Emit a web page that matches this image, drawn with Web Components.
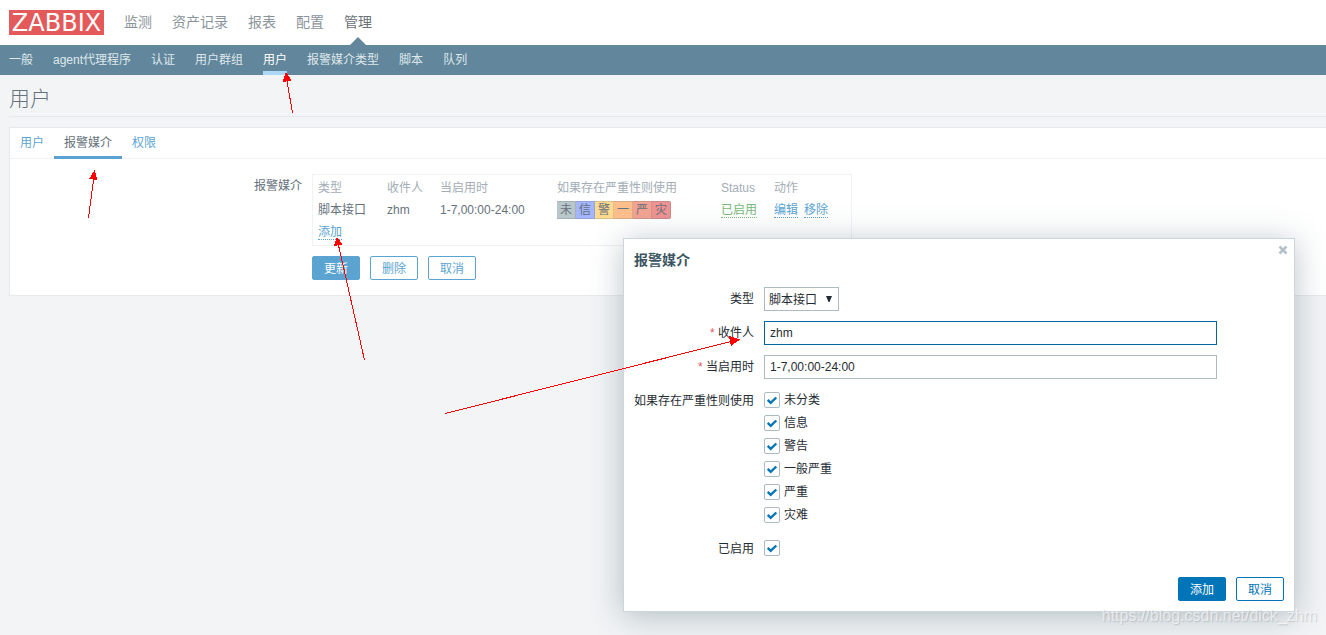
<!DOCTYPE html>
<html lang="zh-CN">
<head>
<meta charset="utf-8">
<title>用户</title>
<style>
  body {
    margin: 0;
    min-height: 100vh;
    position: relative;
    background: #f2f4f6;
    color: #66717b;
    font: 12px/16px "Liberation Sans", "Noto Sans CJK SC", sans-serif;
  }
</style>
</head>
<body>
<zbx-app></zbx-app>

<script>
const define = (name, html, setup) => {
  const template = document.createElement('template');
  template.innerHTML = html;
  customElements.define(name, class extends HTMLElement {
    constructor() {
      super();
      this.attachShadow({ mode: 'open' }).append(template.content.cloneNode(true));
    }
    connectedCallback() {
      if (setup) setup(this, this.shadowRoot);
    }
  });
};

define('zbx-header', `
  <style>
    :host { display: block; background: #fff; }
    .top { display: flex; align-items: center; gap: 20px; height: 45px; padding-left: 9px; }
    .logo { width: 95px; height: 25px; background: #e45959; color: #fff; text-align: center;
            font: 24px/27px "DejaVu Sans", sans-serif; text-decoration: none; }
    nav { display: flex; gap: 20px; }
    nav a { text-decoration: none; position: relative; }
    .main a { color: #8a949b; font-size: 14px; line-height: 45px; }
    .main a.on { color: #6a7278; }
    .main a.on::after { content: ""; position: absolute; left: 50%; bottom: 0; margin-left: -8px;
            border: 8px solid transparent; border-top: 0; border-bottom-color: #62879d; }
    .sub { background: #62879d; padding-left: 9px; }
    .sub a { color: #dfe7eb; line-height: 30px; }
    .sub a.on { color: #fff; }
    .sub a.on::after { content: ""; position: absolute; inset: auto 0 0; height: 4px; background: #acd9f7; }
  </style>
  <div class="top">
    <a class="logo" href="#">ZABBIX</a>
    <nav class="main">
      <a href="#">监测</a><a href="#">资产记录</a><a href="#">报表</a><a href="#">配置</a><a href="#" class="on">管理</a>
    </nav>
  </div>
  <nav class="sub">
    <a href="#">一般</a><a href="#">agent代理程序</a><a href="#">认证</a><a href="#">用户群组</a><a href="#" class="on">用户</a><a href="#">报警媒介类型</a><a href="#">脚本</a><a href="#">队列</a>
  </nav>
`);

define('zbx-button', `
  <style>
    :host { display: inline-block; --tone: #5ba4d1; }
    :host([strong]) { --tone: #0275b8; }
    button { box-sizing: border-box; height: 24px; padding: 1px 11px 0; border: 1px solid var(--tone);
             border-radius: 2px; background: #fff; color: var(--tone); font: inherit; line-height: 22px; display: block; }
    :host([primary]) button { background: var(--tone); color: #fff; }
  </style>
  <button type="button"><slot></slot></button>
`);

define('zbx-tabs', `
  <style>
    :host { display: block; border-bottom: 1px solid #f0f2f4; }
    nav { display: flex; height: 30px; }
    a { position: relative; padding: 0 10px; line-height: 30px; color: #5ba4d1; text-decoration: none; }
    a.on { color: #66717b; }
    a.on::after { content: ""; position: absolute; inset: auto 0 -1px; height: 3px; background: #5ba4d1; }
  </style>
  <nav><a href="#">用户</a><a href="#" class="on">报警媒介</a><a href="#">权限</a></nav>
`);

define('zbx-severity', `
  <style>
    :host { display: flex; }
    span { box-sizing: border-box; width: 19px; height: 18px; line-height: 16px; text-align: center;
           color: #66717b; border: 1px solid rgba(90, 100, 110, .22); border-left-width: 0; }
    span:first-child { border-left-width: 1px; width: 20px; border-radius: 2px 0 0 2px; }
    span:last-child { border-radius: 0 2px 2px 0; }
    .s0 { background: #b9c7cc; } .s1 { background: #a3b6ff; } .s2 { background: #ffda8f; }
    .s3 { background: #ffbf8c; } .s4 { background: #f2a393; } .s5 { background: #ee9292; }
  </style>
  <span class="s0">未</span><span class="s1">信</span><span class="s2">警</span><span class="s3">一</span><span class="s4">严</span><span class="s5">灾</span>
`);

define('zbx-media-table', `
  <style>
    :host { display: block; box-sizing: border-box; width: 540px; max-width: 100%;
            border: 1px solid #f0f2f4; padding: 2px 5px; }
    table { width: 100%; table-layout: fixed; border-collapse: collapse; }
    th, td { height: 22px; padding: 0; text-align: left; font-weight: normal; white-space: nowrap; }
    th { color: #a3adb5; }
    .c1 { width: 69px; } .c2 { width: 53px; } .c3 { width: 117px; } .c4 { width: 164px; } .c5 { width: 53px; }
    a { display: inline-block; line-height: 14px; color: #5ba4d1; text-decoration: none; border-bottom: 1px dotted; }
    a + a { margin-left: 6px; }
    a.ok { color: #76b879; }
  </style>
  <table>
    <colgroup><col class="c1"><col class="c2"><col class="c3"><col class="c4"><col class="c5"><col></colgroup>
    <thead><tr><th>类型</th><th>收件人</th><th>当启用时</th><th>如果存在严重性则使用</th><th>Status</th><th>动作</th></tr></thead>
    <tbody>
      <tr><td>脚本接口</td><td>zhm</td><td>1-7,00:00-24:00</td><td><zbx-severity></zbx-severity></td>
        <td><a class="ok" href="#">已启用</a></td><td><a href="#">编辑</a><a href="#">移除</a></td></tr>
      <tr><td colspan="6"><a href="#">添加</a></td></tr>
    </tbody>
  </table>
`);

define('zbx-check', `
  <style>
    :host { display: block; }
    label { display: flex; align-items: flex-start; gap: 4px; height: 20px; padding-top: 3px; }
    .box { display: grid; width: 16px; height: 16px; }
    input, svg { grid-area: 1 / 1; margin: 0; width: 16px; height: 16px; }
    input { appearance: none; box-sizing: border-box; border: 1px solid #acbbc2; border-radius: 2px; background: #fff; }
    svg { pointer-events: none; visibility: hidden; }
    input:checked + svg { visibility: visible; }
  </style>
  <label><span class="box"><input type="checkbox" checked><svg viewBox="0 0 16 16"><path d="M3.7 7.900l3 3 5.600-5.400" fill="none" stroke="#0275b8" stroke-width="2.400"/></svg></span><slot></slot></label>
`, (host, root) => {
  if (host.hasAttribute('label')) root.querySelector('input').setAttribute('aria-label', host.getAttribute('label'));
});

define('zbx-media-dialog', `
  <style>
    :host { display: block; box-sizing: border-box; background: #fff; border: 1px solid #ccd5d9; padding: 10px;
            color: #1f2c33; box-shadow: 0 4px 30px rgba(60, 85, 99, .35); }
    header { display: flex; justify-content: space-between; height: 38px; }
    h4 { margin: 0; font-size: 14px; line-height: 22px; font-weight: bold; color: #3c5563; }
    .close { display: block; width: 10px; height: 10px; padding: 0; border: 0; background: none; margin-right: -4px; margin-top: -4px; }
    .close svg { display: block; }
    form { display: grid; grid-template-columns: max-content minmax(0, 1fr); gap: 10px; }
    form > label, .label { text-align: right; line-height: 24px; }
    .star { color: #e45959; }
    .text { box-sizing: border-box; width: 453px; max-width: 100%; height: 24px; margin: 0; padding: 0 5px;
            border: 1px solid #acbbc2; font: inherit; color: inherit; background: #fff; outline: 0; }
    .text.current { border-color: #00689c; }
    .select { display: grid; justify-self: start; width: 75px; }
    select, .select svg { grid-area: 1 / 1; }
    select { appearance: none; box-sizing: border-box; height: 24px; width: 100%; margin: 0; padding: 2px 4px 0;
             border: 1px solid #acbbc2; border-radius: 0; background: #fff; font: inherit; color: inherit; }
    .select svg { justify-self: end; align-self: center; margin-right: 7px; pointer-events: none; }
    footer { display: flex; justify-content: flex-end; gap: 10px; margin-top: 16px; }
  </style>
  <header>
    <h4>报警媒介</h4>
    <button class="close" type="button" aria-label="关闭"><svg width="10" height="10" viewBox="0 0 10 10"><path d="M1.500 1.500l7 7M8.500 1.500l-7 7" stroke="#b5c1ca" stroke-width="2.600"/></svg></button>
  </header>
  <form>
    <label for="type">类型</label>
    <span class="select"><select id="type"><option>脚本接口</option></select><svg width="6" height="6" viewBox="0 0 6 6"><path d="M0 0h6L3.500 6h-1z" fill="#1f2c33"/></svg></span>
    <label for="sendto"><span class="star">*</span> 收件人</label>
    <input class="text current" id="sendto" type="text" value="zhm">
    <label for="period"><span class="star">*</span> 当启用时</label>
    <input class="text" id="period" type="text" value="1-7,00:00-24:00">
    <div class="label">如果存在严重性则使用</div>
    <div><zbx-check>未分类</zbx-check><zbx-check>信息</zbx-check><zbx-check>警告</zbx-check><zbx-check>一般严重</zbx-check><zbx-check>严重</zbx-check><zbx-check>灾难</zbx-check></div>
    <div class="label">已启用</div>
    <zbx-check label="已启用"></zbx-check>
  </form>
  <footer><zbx-button strong primary>添加</zbx-button><zbx-button strong>取消</zbx-button></footer>
`);

define('zbx-arrows', `
  <style>
    :host { position: absolute; inset: 0; overflow: hidden; pointer-events: none; }
    svg { display: block; }
  </style>
  <svg width="800" height="430" fill="#f00" stroke="#f00" shape-rendering="crispEdges" aria-hidden="true">
    <path d="M292.500 113L286.500 78M88.500 218L94 176M364.500 360L338 243M445 413.500L733 341" fill="none"/>
    <path d="M286 72l-3.500 10 9-1.500zM94.500 170l-5.500 9 8.500 1zM337 237l-3 9 8.500-1.500zM740 339.500l-11-3.500 2 10z" stroke="none"/>
  </svg>
`);

define('zbx-app', `
  <style>
    :host { display: block; }
    main { padding-left: 9px; }
    h1 { margin: 0 0 10px; padding: 10px 0 4px; border-bottom: 1px solid #e6eaed; font-size: 21px; line-height: 27px; font-weight: 300; color: #66717b; }
    .panel { background: #fff; border: 1px solid #e6eaed; border-right: 0; }
    .row { display: grid; grid-template-columns: minmax(60px, 292px) minmax(0, 1fr); column-gap: 10px; padding: 15px 0; }
    .label { text-align: right; line-height: 24px; }
    .actions { display: flex; gap: 10px; margin-top: 10px; }
    zbx-media-dialog { position: absolute; top: 238px; right: 31px; width: 672px; }
    .mark { position: absolute; right: 9px; bottom: 9px; font-size: 16px; line-height: 20px;
            color: rgba(255, 255, 255, .6); text-shadow: 1px 1px 1px rgba(120, 130, 135, .3); }
  </style>
  <zbx-header></zbx-header>
  <main>
    <h1>用户</h1>
    <section class="panel">
      <zbx-tabs></zbx-tabs>
      <div class="row">
        <div class="label">报警媒介</div>
        <div>
          <zbx-media-table></zbx-media-table>
          <div class="actions"><zbx-button primary>更新</zbx-button><zbx-button>删除</zbx-button><zbx-button>取消</zbx-button></div>
        </div>
      </div>
    </section>
  </main>
  <zbx-media-dialog role="dialog" aria-label="报警媒介"></zbx-media-dialog>
  <zbx-arrows></zbx-arrows>
  <div class="mark">https://blog.csdn.net/dick_zhm</div>
`);
</script>
</body>
</html>
